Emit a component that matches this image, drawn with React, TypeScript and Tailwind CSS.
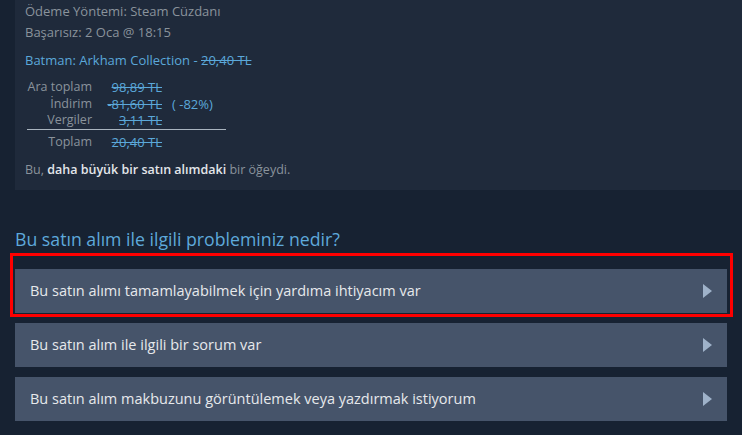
import React from "react";

const options = [
  "Bu satın alımı tamamlayabilmek için yardıma ihtiyacım var",
  "Bu satın alım ile ilgili bir sorum var",
  "Bu satın alım makbuzunu görüntülemek veya yazdırmak istiyorum",
];

const totals = [
  { label: "Ara toplam", value: "98,89 TL" },
  { label: "İndirim", value: "-81,60 TL", extra: "( -82%)" },
  { label: "Vergiler", value: "3,11 TL" },
];

const Arrow = () => (
  <svg width="9" height="14" viewBox="0 0 9 14" className="shrink-0">
    <path d="M0 0 L9 7 L0 14 Z" fill="#9fb2c9" />
  </svg>
);

export default function App() {
  return (
    <div
      className="w-[742px] h-[435px] overflow-hidden bg-[#172232] text-[13px]"
      style={{ fontFamily: "'Open Sans', 'Noto Sans', Arial, sans-serif" }}
    >
      <div className="ml-[15px] h-[190px] bg-[#1f2a3b] pl-[10px] pt-[1px] text-[#8a939c]">
        <div className="leading-[20px]">Ödeme Yöntemi: Steam Cüzdanı</div>
        <div className="leading-[20px] mt-[1px]">Başarısız: 2 Oca @ 18:15</div>
        <div className="mt-[8px] leading-[20px] text-[#5ba8da]">
          Batman: Arkham Collection - <span className="line-through">20,40 TL</span>
        </div>
        <div className="mt-[9px] w-[220px] whitespace-nowrap">
          {totals.map((t) => (
            <div key={t.label} className="flex leading-[16.5px]">
              <span className="w-[67px] text-right text-[12.5px]">{t.label}</span>
              <span className="w-[70px] text-right text-[#5ba8da] line-through">{t.value}</span>
              {t.extra && <span className="ml-[10px] text-[#5ba8da]">{t.extra}</span>}
            </div>
          ))}
          <div className="ml-[2px] h-px w-[199px] bg-[#a9b4bf]" />
          <div className="mt-[4px] flex leading-[16.5px]">
            <span className="w-[67px] text-right text-[12.5px]">Toplam</span>
            <span className="w-[70px] text-right text-[#5ba8da] line-through">20,40 TL</span>
          </div>
        </div>
        <div className="mt-[11px] text-[12.5px] leading-[18px]">
          Bu, <span className="font-semibold text-[#e3e6ea]">daha büyük bir satın alımdaki</span> bir öğeydi.
        </div>
      </div>

      <div className="px-[15px]">
        <h2 className="mt-[37px] text-[17.7px] leading-[24px] text-[#5ea9db]">
          Bu satın alım ile ilgili probleminiz nedir?
        </h2>
        <div className="mt-[18px] flex flex-col gap-[10px]">
          {options.map((o, i) => (
            <div key={o} className="relative">
              {i === 0 && (
                <div className="pointer-events-none absolute -top-[16px] -left-[5px] -right-[6px] -bottom-[4px] border-[3px] border-[#ff0000]" />
              )}
              <div className="flex h-[44px] items-center justify-between bg-[#46546a] pl-[15px] pr-[15px] text-[14.5px] text-[#e6e9ec]">
                <span>{o}</span>
                <Arrow />
              </div>
            </div>
          ))}
        </div>
      </div>
    </div>
  );
}
